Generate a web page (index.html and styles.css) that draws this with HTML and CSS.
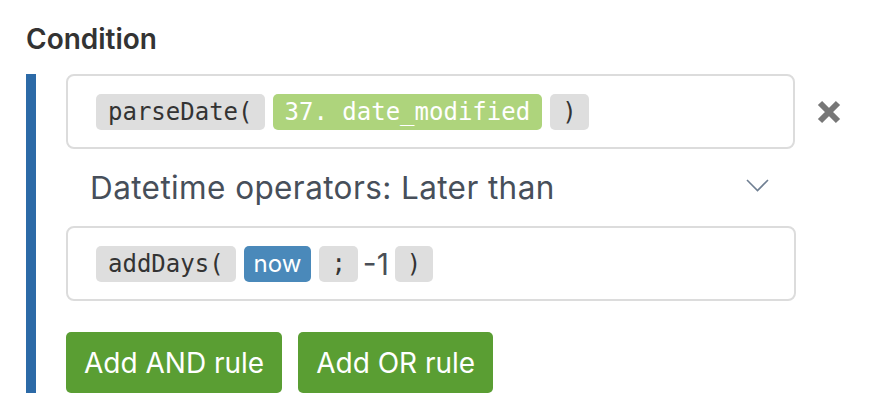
FILE: index.html
```html
<!DOCTYPE html>
<html>
<head>
<meta charset="utf-8">
<link rel="stylesheet" href="styles.css">
</head>
<body>
<div class="page">
  <h2 class="title">Condition</h2>
  <div class="group">
    <div class="rule">
      <div class="rule-row">
        <div class="box">
          <span class="chip fn">parseDate(</span>
          <span class="chip field">37. date_modified</span>
          <span class="chip fn">)</span>
        </div>
        <button class="remove" aria-label="Remove">
          <svg width="26" height="26" viewBox="0 0 26 26"><path d="M4 4 L22 22 M22 4 L4 22" stroke="#777" stroke-width="6" stroke-linecap="butt"/></svg>
        </button>
      </div>
      <div class="select">
        <span class="select-label">Datetime operators: Later than</span>
        <svg class="chev" width="23" height="13" viewBox="0 0 23 13"><path d="M1 1 L11.5 11.5 L22 1" fill="none" stroke="#6f7f92" stroke-width="1.6"/></svg>
      </div>
      <div class="rule-row">
        <div class="box">
          <span class="chip fn">addDays(</span>
          <span class="chip var">now</span>
          <span class="chip fn">;</span>
          <span class="lit">-1</span>
          <span class="chip fn">)</span>
        </div>
      </div>
    </div>
    <div class="actions">
      <button class="btn btn-and">Add AND rule</button>
      <button class="btn btn-or">Add OR rule</button>
    </div>
  </div>
</div>
</body>
</html>
```

FILE: styles.css
```css
* { box-sizing: border-box; }
html, body { margin: 0; padding: 0; background: #fff; }
body { font-family: Inter, "Noto Sans", sans-serif; color: #333; }
.page { padding: 22px 26px 0 26px; }
.title {
  margin: 0;
  font-size: 28px;
  font-weight: 600;
  line-height: 34px;
  color: #333;
}
.group {
  margin-top: 18px;
  border-left: 10px solid #2c6aa7;
  padding-left: 30px;
  width: 816px;
}
.rule { display: flex; flex-direction: column; }
.rule-row { display: flex; align-items: center; }
.box {
  width: 730px;
  height: 75px;
  border: 2px solid #dcdcdc;
  border-radius: 8px;
  padding: 0 28px;
  display: flex;
  align-items: center;
  gap: 8px;
}
.chip {
  height: 36px;
  display: inline-flex;
  align-items: center;
  padding: 0 12px;
  border-radius: 5px;
  white-space: pre;
}
.fn, .field {
  font-family: "DejaVu Sans Mono", monospace;
  font-size: 24px;
}
.fn { background: #dedede; color: #333; }
.field { background: #aed47c; color: #fff; }
.var {
  background: #4a89ba;
  color: #fff;
  font-size: 24px;
  padding: 0 10px;
}
.lit { font-size: 30px; color: #4a4f57; margin: 0 -2px 0 -3px; }
.remove {
  margin-left: 21px;
  border: 0;
  background: none;
  padding: 0;
  display: flex;
}
.select {
  width: 730px;
  height: 77px;
  display: flex;
  align-items: center;
  justify-content: space-between;
  padding: 0 27px 0 24px;
}
.select-label { font-size: 31.5px; letter-spacing: 0.4px; color: #474f5a; }
.chev { margin-top: -4px; }
.actions {
  margin-top: 31px;
  display: flex;
  gap: 16px;
}
.btn {
  height: 61px;
  border: 0;
  border-radius: 5px;
  background: #5a9e33;
  color: #fff;
  font-family: Inter, sans-serif;
  font-size: 28px;
  padding: 0 18px;
}
```
